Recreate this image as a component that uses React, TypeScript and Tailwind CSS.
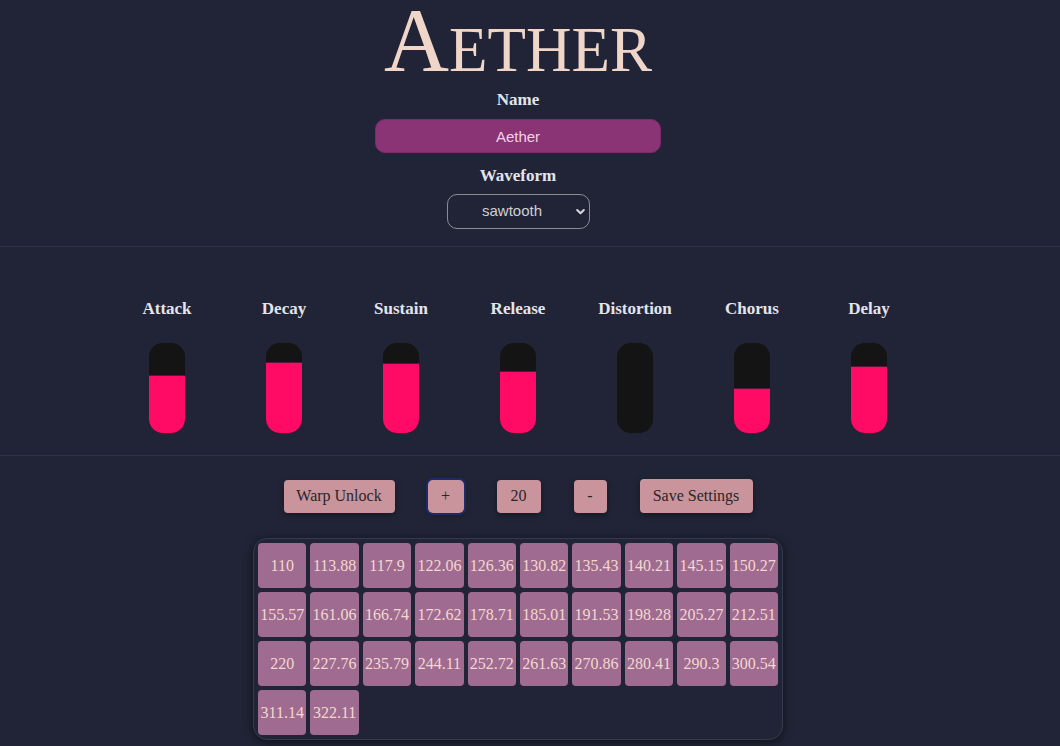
import React from "react";

const serif = { fontFamily: '"Liberation Serif", "Times New Roman", serif' };
const sans = { fontFamily: '"Liberation Sans", Arial, sans-serif' };

const sliders: { label: string; fill: number }[] = [
  { label: "Attack", fill: 58 },
  { label: "Decay", fill: 71 },
  { label: "Sustain", fill: 70 },
  { label: "Release", fill: 62 },
  { label: "Distortion", fill: 0 },
  { label: "Chorus", fill: 45 },
  { label: "Delay", fill: 67 },
];

const freqs = [
  "110", "113.88", "117.9", "122.06", "126.36", "130.82", "135.43", "140.21", "145.15", "150.27",
  "155.57", "161.06", "166.74", "172.62", "178.71", "185.01", "191.53", "198.28", "205.27", "212.51",
  "220", "227.76", "235.79", "244.11", "252.72", "261.63", "270.86", "280.41", "290.3", "300.54",
  "311.14", "322.11",
];

export default function App() {
  return (
    <div className="min-h-[746px] w-[1060px] bg-[#212436] overflow-hidden" style={serif}>
      <div className="w-[1036px] flex flex-col items-center">
        <h1
          className="mt-[1px] text-[90px] leading-[80px] h-[80px] text-[#efd6c9] font-normal"
          style={{ ...serif, fontVariant: "small-caps" }}
        >
          Aether
        </h1>
        <label className="mt-[9px] h-[20px] leading-[20px] text-[17px] font-bold text-[#e4e4ec]">Name</label>
        <input
          readOnly
          value="Aether"
          className="mt-[9px] w-[286px] h-[34px] rounded-[10px] bg-[#8a3375] border border-[#7a2c68] text-center text-[15px] text-[#f2d2e4] outline-none"
          style={sans}
        />
        <label className="mt-[13px] h-[20px] leading-[20px] text-[17px] font-bold text-[#e4e4ec]">Waveform</label>
        <div className="relative mt-[8px] w-[143px] h-[35px]">
          <select
            defaultValue="sawtooth"
            className="appearance-none w-full h-full rounded-[10px] border border-[#8c8c90] bg-transparent text-center pr-[12px] text-[15px] text-[#cfcfd4] outline-none"
            style={{ ...sans, textAlignLast: "center" }}
          >
            <option value="sine">sine</option>
            <option value="square">square</option>
            <option value="sawtooth">sawtooth</option>
            <option value="triangle">triangle</option>
          </select>
          <svg
            className="absolute right-[5px] top-[14px] pointer-events-none"
            width="9"
            height="8"
            viewBox="0 0 9 8"
          >
            <path d="M1.2 2 L4.5 5.3 L7.8 2" fill="none" stroke="#d8d8dc" strokeWidth="2" strokeLinecap="round" strokeLinejoin="round" />
          </svg>
        </div>
      </div>

      <div className="mt-[17px] border-t border-[#303448]" />

      <div className="w-[1036px] flex justify-center pt-[52px] pb-[22px]">
        <div className="grid grid-cols-7 w-[819px]">
          {sliders.map((s) => (
            <div key={s.label} className="flex flex-col items-center">
              <div className="h-[20px] leading-[20px] text-[17px] font-bold text-[#e4e4ec]">{s.label}</div>
              <div className="mt-[24px] w-[36px] h-[90px] rounded-[14px] bg-[#141414] overflow-hidden flex flex-col justify-end">
                {s.fill > 0 && (
                  <div
                    className="w-full bg-[#ff0a64] border-t border-[#5c1244]"
                    style={{ height: `${s.fill}px` }}
                  />
                )}
              </div>
            </div>
          ))}
        </div>
      </div>

      <div className="border-t border-[#303448]" />

      <div className="w-[1036px] flex flex-col items-center">
        <div className="mt-[23px] flex items-center gap-[33px] text-[16px] text-[#2b2626]">
          <button className="w-[111px] h-[33px] rounded-[4px] bg-[#c9949c] shadow-[0_2px_6px_rgba(0,0,0,0.35)]">
            Warp Unlock
          </button>
          <button className="w-[36px] h-[33px] rounded-[5px] bg-[#c9949c] ring-2 ring-[#1e2b6b] shadow-[0_2px_6px_rgba(0,0,0,0.35)]">
            +
          </button>
          <button className="w-[44px] h-[33px] rounded-[4px] bg-[#c9949c] shadow-[0_2px_6px_rgba(0,0,0,0.35)]">
            20
          </button>
          <button className="w-[33px] h-[33px] rounded-[4px] bg-[#c9949c] shadow-[0_2px_6px_rgba(0,0,0,0.35)]">
            -
          </button>
          <button className="w-[113px] h-[34px] rounded-[4px] bg-[#c9949c] shadow-[0_2px_6px_rgba(0,0,0,0.35)]">
            Save Settings
          </button>
        </div>

        <div className="mt-[25px] w-[530px] rounded-[14px] border border-[#363a4e] bg-[#212436] p-[4px] shadow-[0_2px_10px_rgba(0,0,0,0.55)]">
          <div className="grid grid-cols-10 gap-[4px]">
            {freqs.map((f) => (
              <div
                key={f}
                className="h-[45px] rounded-[4px] bg-[#9f6b90] flex items-center justify-center text-[16px] text-[#f3d8cf] whitespace-nowrap"
              >
                {f}
              </div>
            ))}
          </div>
        </div>
      </div>
    </div>
  );
}
